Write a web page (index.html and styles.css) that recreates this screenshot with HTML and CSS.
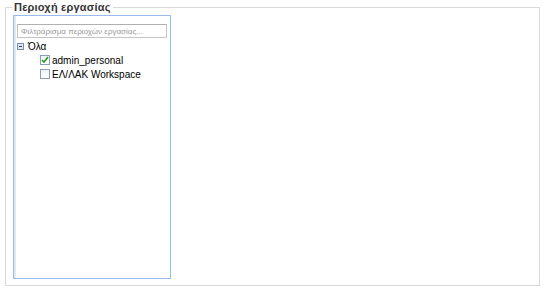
FILE: index.html
```html
<!DOCTYPE html>
<html lang="el">
<head>
  <meta charset="UTF-8">
  <title>Περιοχή εργασίας</title>
  <link rel="stylesheet" href="styles.css">
</head>
<body>

  <fieldset class="workspace">
    <legend>Περιοχή εργασίας</legend>

    <div class="tree-panel">
      <div class="filter">
        <input type="text" placeholder="Φιλτράρισμα περιοχών εργασίας...">
      </div>

      <ul class="tree">
        <li class="node root">
          <span class="toggle"></span>
          <span class="label">Όλα</span>
        </li>
        <li class="node leaf">
          <span class="check checked">
            <svg width="8" height="8" viewBox="0 0 8 8"><path d="M1 4 L3 6 L7 1" fill="none" stroke="#2f9a1c" stroke-width="1.6"/></svg>
          </span>
          <span class="label">admin_personal</span>
        </li>
        <li class="node leaf">
          <span class="check"></span>
          <span class="label">ΕΛ/ΛΑΚ Workspace</span>
        </li>
      </ul>
    </div>
  </fieldset>

</body>
</html>
```

FILE: styles.css
```css
body {
  margin: 0;
  background: #fff;
  font-family: "Liberation Sans", Arial, sans-serif;
  color: #000;
}

.workspace {
  width: 535px;
  box-sizing: border-box;
  margin: 0 0 0 5px;
  padding: 1px 6px 6px 7px;
  border: 1px solid #d9d9d9;
}

.workspace legend {
  font-size: 11px;
  font-weight: bold;
  letter-spacing: 0.2px;
  line-height: 14px;
  padding: 0 2px;
  margin-left: -1px;
  color: #333;
}

/* tree panel */
.tree-panel {
  width: 158px;
  height: 264px;
  box-sizing: border-box;
  border: 1px solid #99bbe8;
  box-shadow: inset 2px 0 0 #dfe8f6;
  padding: 8px 3px 0 3px;
}

.filter input {
  display: block;
  width: 150px;
  height: 14px;
  box-sizing: border-box;
  margin: 0;
  padding: 0 3px;
  border: 1px solid #c4c4c4;
  border-top-color: #b0b0b0;
  font-family: "Liberation Sans", Arial, sans-serif;
  font-size: 8px;
  outline: none;
}

.filter input::placeholder {
  color: #9a9a9a;
}

.tree {
  list-style: none;
  margin: 1px 0 0 0;
  padding: 0;
  font-size: 10px;
}

.node {
  display: flex;
  align-items: center;
  height: 14px;
}

.root .toggle {
  width: 7px;
  height: 7px;
  box-sizing: border-box;
  border: 1px solid #7a8ea8;
  background: #dce6f4;
  position: relative;
  margin-right: 4px;
}

.root .toggle::after {
  content: "";
  position: absolute;
  left: 1px;
  top: 2px;
  width: 3px;
  height: 1px;
  background: #1c3d6e;
}

.leaf {
  padding-left: 23px;
}

.check {
  width: 10px;
  height: 10px;
  box-sizing: border-box;
  border: 1px solid #8c9db5;
  background: linear-gradient(#eef2f8, #fff);
  margin-right: 2px;
  display: flex;
  align-items: center;
  justify-content: center;
}

.label {
  white-space: nowrap;
}
```
